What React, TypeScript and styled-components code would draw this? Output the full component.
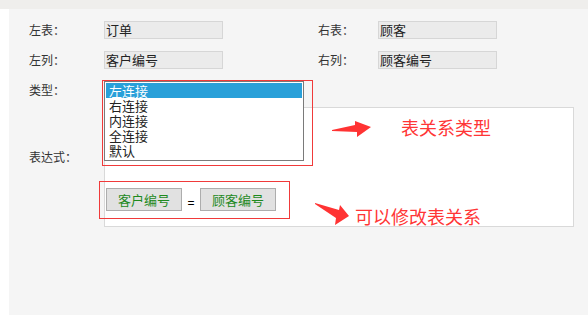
import { FunctionComponent } from "react"
import styled, { createGlobalStyle } from 'styled-components'

const GlobalStyle = createGlobalStyle`
    html, body{
        margin: 0;
        padding: 0;
        background: #ffffff;
        font-family: "Noto Sans CJK SC", "Noto Sans", sans-serif;
    }
`

const Page = styled.div`
    width: 588px;
    height: 315px;
    display: flex;
    flex-direction: column;
    overflow: hidden;
`

const TopBand = styled.div`
    height: 9px;
    background: #efeeec;
`

const Panel = styled.div`
    flex: 1;
    margin-left: 9px;
    background: #f5f5f5;
    padding: 12px 0 0 20px;
`

const Row = styled.div<{ $gap?: number }>`
    display: flex;
    align-items: center;
    min-height: 18px;
    margin-bottom: ${p => p.$gap ?? 12}px;
`

const Label = styled.span<{ $top?: number }>`
    width: 75px;
    flex-shrink: 0;
    font-size: 12px;
    color: #333;
    line-height: 18px;
    align-self: ${p => p.$top ? 'flex-start' : 'center'};
    padding-top: ${p => p.$top ?? 0}px;
`

const RightLabel = styled(Label)`
    width: 60px;
    margin-left: 95px;
`

const Field = styled.div`
    box-sizing: border-box;
    width: 119px;
    height: 18px;
    background: #ebebeb;
    border: 1px solid #d6d6d6;
    font-size: 13px;
    line-height: 16px;
    color: #222;
    padding-left: 1px;
`

const SelectHolder = styled.div`
    position: relative;
    width: 200px;
    height: 18px;
`

const ListBox = styled.ul`
    position: absolute;
    top: 0;
    left: 0;
    z-index: 3;
    box-sizing: border-box;
    width: 200px;
    height: 80px;
    margin: 0;
    padding: 1px;
    list-style: none;
    background: #fff;
    border: 1px solid #7a7a7a;
`

const Option = styled.li<{ $active?: boolean }>`
    height: 15px;
    line-height: 15px;
    font-size: 13px;
    padding-left: 3px;
    color: ${p => p.$active ? '#fff' : '#222'};
    background: ${p => p.$active ? '#29a0d9' : 'transparent'};
`

const RedFrame = styled.div<{ $l: number, $t: number, $w: number, $h: number }>`
    position: absolute;
    left: ${p => p.$l}px;
    top: ${p => p.$t}px;
    width: ${p => p.$w}px;
    height: ${p => p.$h}px;
    box-sizing: border-box;
    border: 1px solid #f03a3a;
    pointer-events: none;
    z-index: 4;
`

const ExprBox = styled.div`
    position: relative;
    box-sizing: border-box;
    width: 470px;
    height: 120px;
    background: #fff;
    border: 1px solid #d9d9d9;
    padding: 80px 0 0 1px;
`

const ButtonRow = styled.div`
    position: relative;
    display: flex;
    align-items: center;
    gap: 5px;
`

const Btn = styled.button`
    box-sizing: border-box;
    width: 76px;
    height: 23px;
    padding: 0;
    background: #e1e1e1;
    border: 1px solid #adadad;
    color: #1e8a1e;
    font-family: "Noto Sans CJK SC", sans-serif;
    font-size: 13px;
`

const Equals = styled.span`
    font-family: "Liberation Sans", sans-serif;
    font-size: 12px;
    color: #000;
    width: 8px;
    margin-top: 6px;
    text-align: center;
`

const Note = styled.span<{ $l: number, $t: number }>`
    position: absolute;
    left: ${p => p.$l}px;
    top: ${p => p.$t}px;
    font-size: 18px;
    line-height: 24px;
    color: #ff3636;
    white-space: nowrap;
`

const Arrow = styled.svg<{ $l: number, $t: number }>`
    position: absolute;
    left: ${p => p.$l}px;
    top: ${p => p.$t}px;
`

const App: FunctionComponent = () => {
    return (
        <Page>
            <GlobalStyle />
            <TopBand />
            <Panel>
                <Row>
                    <Label>左表：</Label>
                    <Field>订单</Field>
                    <RightLabel>右表：</RightLabel>
                    <Field>顾客</Field>
                </Row>
                <Row>
                    <Label>左列：</Label>
                    <Field>客户编号</Field>
                    <RightLabel>右列：</RightLabel>
                    <Field>顾客编号</Field>
                </Row>
                <Row $gap={8}>
                    <Label>类型：</Label>
                    <SelectHolder>
                        <ListBox>
                            <Option $active>左连接</Option>
                            <Option>右连接</Option>
                            <Option>内连接</Option>
                            <Option>全连接</Option>
                            <Option>默认</Option>
                        </ListBox>
                        <RedFrame $l={-2} $t={-1} $w={211} $h={86} />
                    </SelectHolder>
                </Row>
                <Row>
                    <Label $top={41}>表达式：</Label>
                    <ExprBox>
                        <Arrow $l={226} $t={11} width="42" height="20" viewBox="0 0 42 20">
                            <polygon points="1,11 24,6 24,2 40,8 26,18 26,13 1,12" fill="#ff3333" />
                        </Arrow>
                        <Note $l={296} $t={7}>表关系类型</Note>
                        <Arrow $l={208} $t={93} width="40" height="28" viewBox="0 0 40 28">
                            <polygon points="2,2 26,9 27,4 36,15 22,24 23,17 2,3" fill="#ff3333" />
                        </Arrow>
                        <Note $l={250} $t={96}>可以修改表关系</Note>
                        <ButtonRow>
                            <Btn>客户编号</Btn>
                            <Equals>=</Equals>
                            <Btn>顾客编号</Btn>
                            <RedFrame $l={-7} $t={-7} $w={191} $h={38} />
                        </ButtonRow>
                    </ExprBox>
                </Row>
            </Panel>
        </Page>
    )
}

export default App
